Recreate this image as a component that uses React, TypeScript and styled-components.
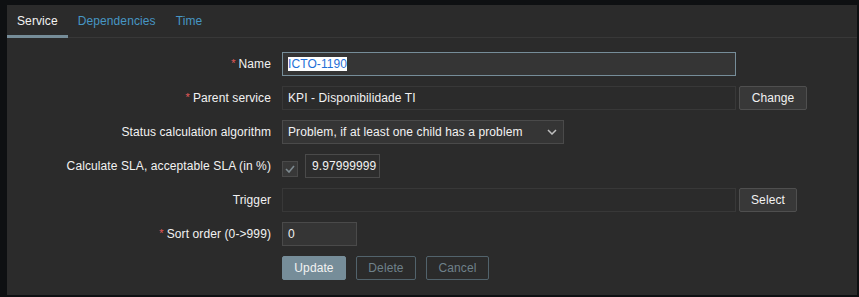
import React from 'react';
import styled, { createGlobalStyle, css } from 'styled-components';

const GlobalStyle = createGlobalStyle`
  html, body {
    margin: 0;
    padding: 0;
    background: #0e1012;
    font-family: "Liberation Sans", Arial, sans-serif;
    font-size: 12px;
    letter-spacing: 0.1px;
    color: #f2f2f2;
  }
`;

const Page = styled.div`
  padding: 5px 2px 2px 7px;
`;

const Panel = styled.div`
  width: 850px;
  height: 290px;
  background: #2b2b2b;
  box-sizing: border-box;
`;

const TabBar = styled.div`
  display: flex;
  height: 32px;
  border-bottom: 1px solid #383838;
`;

const Tab = styled.div<{ $active?: boolean }>`
  position: relative;
  display: flex;
  align-items: center;
  padding: 0 10px;
  color: ${(p) => (p.$active ? '#f2f2f2' : '#4796c4')};
  ${(p) =>
    p.$active &&
    css`
      &::after {
        content: '';
        position: absolute;
        left: 0;
        right: 0;
        bottom: -1px;
        height: 3px;
        background: #768d99;
      }
    `}
`;

const Form = styled.div`
  display: grid;
  grid-template-columns: 264px 1fr;
  grid-auto-rows: 24px;
  column-gap: 11px;
  row-gap: 10px;
  padding-top: 14px;
`;

const Label = styled.div`
  display: flex;
  align-items: center;
  justify-content: flex-end;
  white-space: nowrap;
`;

const Asterisk = styled.span`
  color: #e45959;
  margin-right: 3px;
  font-size: 11px;
  position: relative;
  top: -1px;
`;

const Field = styled.div<{ $gap?: number }>`
  display: flex;
  align-items: center;
  gap: ${(p) => p.$gap ?? 3}px;
`;

const TextBox = styled.div<{ $width: number; $variant?: 'focus' | 'readonly' | 'normal' }>`
  width: ${(p) => p.$width}px;
  height: 24px;
  box-sizing: border-box;
  display: flex;
  align-items: center;
  padding: 0 5px;
  white-space: nowrap;
  overflow: hidden;
  border: 1px solid
    ${(p) => (p.$variant === 'focus' ? '#768d99' : p.$variant === 'readonly' ? '#383838' : '#4a4a4a')};
  background: ${(p) => (p.$variant === 'readonly' ? '#2b2b2b' : '#353535')};
  color: #f2f2f2;
`;

const Selected = styled.span`
  background: #ffffff;
  color: #1f6fd6;
  line-height: 14px;
`;

const SelectBox = styled.div`
  width: 282px;
  height: 24px;
  box-sizing: border-box;
  display: flex;
  align-items: center;
  justify-content: space-between;
  padding: 0 6px 0 5px;
  border: 1px solid #4a4a4a;
  background: #353535;
`;

const CheckBox = styled.div`
  width: 16px;
  height: 16px;
  box-sizing: border-box;
  border: 1px solid #4a4a4a;
  background: #383838;
  display: flex;
  align-items: center;
  justify-content: center;
  margin-top: 6px;
`;

const Button = styled.div<{ $kind?: 'plain' | 'main' | 'alt' }>`
  height: 24px;
  box-sizing: border-box;
  display: flex;
  align-items: center;
  justify-content: center;
  border-radius: 2px;
  ${(p) =>
    p.$kind === 'main'
      ? css`
          background: #768d99;
          border: 1px solid #768d99;
          color: #f2f2f2;
        `
      : p.$kind === 'alt'
      ? css`
          background: transparent;
          border: 1px solid #52636c;
          color: #6f818a;
        `
      : css`
          background: #383838;
          border: 1px solid #4f4f4f;
          color: #f2f2f2;
        `}
`;

const Buttons = styled.div`
  display: flex;
  gap: 10px;
`;

const Req: React.FC<{ children: React.ReactNode }> = ({ children }) => (
  <Label>
    <Asterisk>*</Asterisk>
    {children}
  </Label>
);

export default function App() {
  return (
    <>
      <GlobalStyle />
      <Page>
        <Panel>
          <TabBar>
            <Tab $active>Service</Tab>
            <Tab>Dependencies</Tab>
            <Tab>Time</Tab>
          </TabBar>
          <Form>
            <Req>Name</Req>
            <Field>
              <TextBox $width={454} $variant="focus">
                <Selected>ICTO-1190</Selected>
              </TextBox>
            </Field>

            <Req>Parent service</Req>
            <Field>
              <TextBox $width={454} $variant="readonly">KPI - Disponibilidade TI</TextBox>
              <Button style={{ width: 68 }}>Change</Button>
            </Field>

            <Label>Status calculation algorithm</Label>
            <Field>
              <SelectBox>
                <span>Problem, if at least one child has a problem</span>
                <svg width="10" height="6" viewBox="0 0 10 6">
                  <path d="M1 1l4 4 4-4" fill="none" stroke="#bfbfbf" strokeWidth="1.5" />
                </svg>
              </SelectBox>
            </Field>

            <Label>Calculate SLA, acceptable SLA (in %)</Label>
            <Field $gap={7}>
              <CheckBox>
                <svg width="10" height="8" viewBox="0 0 10 8">
                  <path d="M1 4l3 3 5-6" fill="none" stroke="#7e8a90" strokeWidth="1.6" />
                </svg>
              </CheckBox>
              <TextBox $width={75} style={{ background: '#2d2d2d', paddingLeft: 6 }}>
                9.97999999
              </TextBox>
            </Field>

            <Label>Trigger</Label>
            <Field>
              <TextBox $width={454} $variant="readonly" />
              <Button style={{ width: 58 }}>Select</Button>
            </Field>

            <Req>Sort order (0-&gt;999)</Req>
            <Field>
              <TextBox $width={75}>0</TextBox>
            </Field>

            <div />
            <Buttons>
              <Button $kind="main" style={{ width: 64 }}>Update</Button>
              <Button $kind="alt" style={{ width: 60 }}>Delete</Button>
              <Button $kind="alt" style={{ width: 63 }}>Cancel</Button>
            </Buttons>
          </Form>
        </Panel>
      </Page>
    </>
  );
}
